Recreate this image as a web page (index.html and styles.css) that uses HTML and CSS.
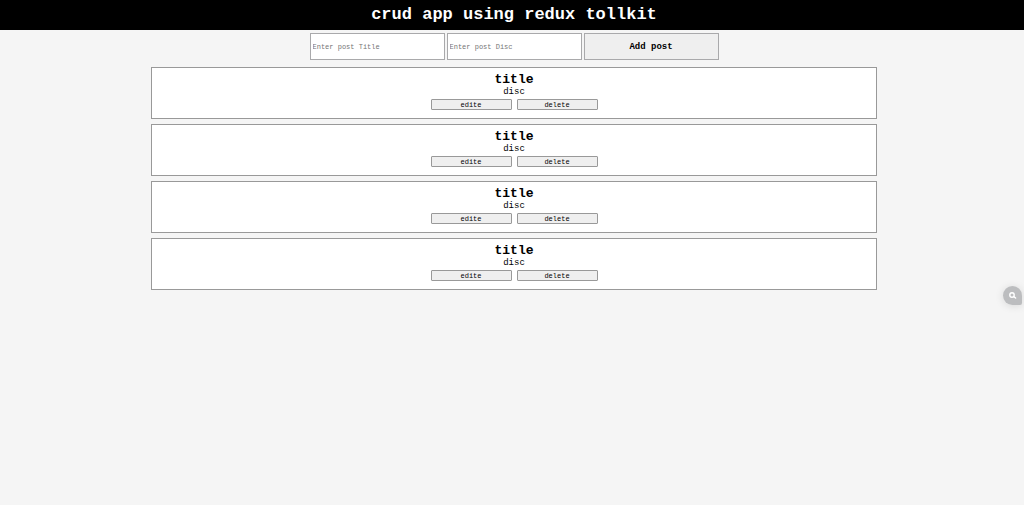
FILE: index.html
```html
<!DOCTYPE html>
<html lang="en">
<head>
  <meta charset="UTF-8" />
  <title>crud app</title>
  <meta name="viewport" content="width=device-width, initial-scale=1.0" />
  <link rel="stylesheet" href="styles.css">
</head>
<body>

  <header class="header">
    <h1>crud app using redux tollkit</h1>
  </header>

  <main class="container">
    <form class="post-form">
      <input type="text" id="title" placeholder="Enter post Title" aria-label="Enter post Title" />
      <input type="text" id="disc" placeholder="Enter post Disc" aria-label="Enter post Disc" />
      <button type="button">Add post</button>
    </form>

    <div class="posts">
      <div class="post">
        <h2>title</h2>
        <p>disc</p>
        <div class="actions">
          <button type="button">edite</button>
          <button type="button">delete</button>
        </div>
      </div>
      <div class="post">
        <h2>title</h2>
        <p>disc</p>
        <div class="actions">
          <button type="button">edite</button>
          <button type="button">delete</button>
        </div>
      </div>
      <div class="post">
        <h2>title</h2>
        <p>disc</p>
        <div class="actions">
          <button type="button">edite</button>
          <button type="button">delete</button>
        </div>
      </div>
      <div class="post">
        <h2>title</h2>
        <p>disc</p>
        <div class="actions">
          <button type="button">edite</button>
          <button type="button">delete</button>
        </div>
      </div>
    </div>
  </main>

  <!-- Floating search button -->
  <button type="button" class="search-btn" aria-label="Search">
    <svg viewBox="0 0 10 10" width="10" height="10" fill="none" stroke="#fff">
      <circle cx="4" cy="4" r="2.2" stroke-width="1.4" />
      <path d="M5.8 5.6l1.8 1.4" stroke-width="1.5" stroke-linecap="round" />
    </svg>
  </button>

</body>
</html>
```

FILE: styles.css
```css
* {
  box-sizing: border-box;
  margin: 0;
  padding: 0;
  font-family: "Liberation Mono", monospace;
}

body {
  min-height: 100vh;
  background: #f5f5f5;
  color: #000;
  text-align: center;
}

.header {
  background: #000;
  color: #fff;
  padding: 5px 0 5px 4px;
}

.header h1 {
  font-size: 17px;
  line-height: 20px;
}

.container {
  padding: 3px 147px 0 151px;
}

.post-form {
  display: flex;
  justify-content: center;
  gap: 2px;
}

.post-form input,
.post-form button {
  width: 135px;
  height: 27px;
  border: 1px solid #a9a9ab;
}

.post-form input {
  background: #fff;
  padding: 0 2px;
  font-size: 7px;
}

.post-form input::placeholder {
  color: #757575;
}

.post-form button {
  background: #efefef;
  font-size: 9px;
  font-weight: bold;
}

.posts {
  display: flex;
  flex-direction: column;
  gap: 5px;
  margin-top: 7px;
}

.post {
  background: #fff;
  border: 1px solid #999;
  padding: 5px 5px 8px;
}

.post h2 {
  font-size: 13px;
  line-height: 14px;
}

.post p {
  font-size: 9px;
  line-height: 10px;
}

.actions {
  display: flex;
  justify-content: center;
  gap: 5px;
  margin-top: 2px;
}

.actions button {
  width: 81px;
  height: 11px;
  background: #efefef;
  border: 1px solid #999;
  border-radius: 1px;
  font-size: 7px;
  line-height: 8px;
}

.search-btn {
  position: fixed;
  right: 2px;
  top: 286px;
  width: 19px;
  height: 19px;
  display: flex;
  align-items: center;
  justify-content: center;
  background: #bcbdbf;
  border: none;
  border-radius: 10px 10px 2px 10px;
  box-shadow: 0 1px 8px rgba(0, 0, 0, 0.12);
}
```
